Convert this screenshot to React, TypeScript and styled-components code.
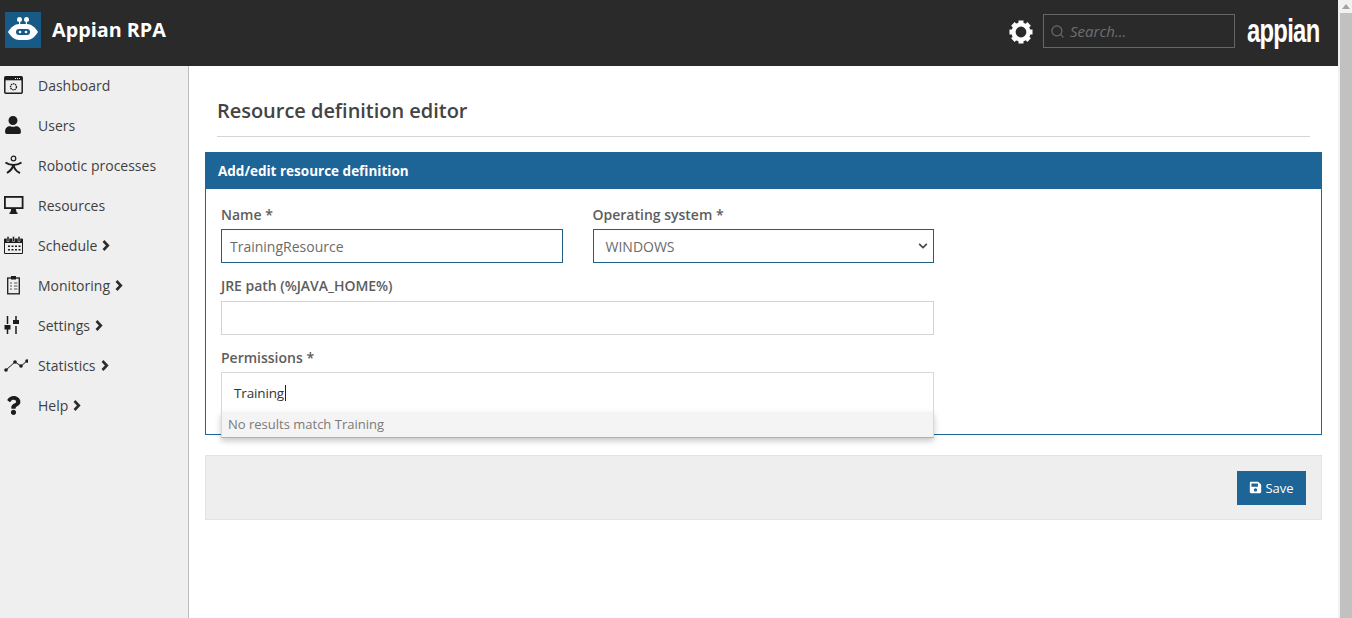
import React from "react";
import styled, { createGlobalStyle } from "styled-components";
import { Search } from "lucide-react";
import { FaSave, FaUser, FaQuestion, FaChevronDown } from "react-icons/fa";

const GlobalStyle = createGlobalStyle`
  html, body {
    margin: 0;
    padding: 0;
    height: 100%;
    overflow: hidden;
    background: #fff;
    font-family: "Open Sans", "Liberation Sans", sans-serif;
  }
  * { box-sizing: border-box; }
`;

const Frame = styled.div`
  width: 1352px;
  height: 618px;
  display: flex;
  overflow: hidden;
`;

const Page = styled.div`
  width: 1338px;
  display: flex;
  flex-direction: column;
`;

const ScrollTrack = styled.div`
  width: 14px;
  padding-left: 2px;
  background: #f1f1f1;
  display: flex;
  flex-direction: column;
  align-items: stretch;
`;

const ScrollArrow = styled.div`
  height: 13px;
  display: flex;
  align-items: center;
  justify-content: center;
  svg { display: block; }
`;

const ScrollThumb = styled.div`
  flex: 1;
  background: #c1c1c1;
`;

const Header = styled.header`
  height: 66px;
  background: #2a2a2a;
  display: flex;
  align-items: center;
  padding: 0 18px 6px 5px;
  flex-shrink: 0;
`;

const LogoBox = styled.div`
  width: 36px;
  height: 36px;
  background: #175a85;
  display: flex;
`;

const Brand = styled.span`
  color: #fff;
  font-size: 19.800px;
  font-weight: 700;
  margin-left: 11px;
  margin-bottom: 2px;
  flex: 1;
`;

const GearButton = styled.div`
  color: #fff;
  display: flex;
  margin-right: 10px;
  margin-top: 4px;
`;

const SearchBox = styled.div`
  width: 192px;
  height: 34px;
  border: 1px solid #666;
  display: flex;
  align-items: center;
  padding-left: 6px;
  gap: 5px;
  color: #6a6a6a;
  margin-top: 2px;
`;

const SearchText = styled.span`
  font-size: 15px;
  font-style: italic;
  color: #6f6f6f;
`;

const AppianMark = styled.span`
  color: #fff;
  font-family: "Liberation Sans", sans-serif;
  font-size: 34px;
  font-weight: 700;
  letter-spacing: -1px;
  line-height: 30px;
  margin-left: 12px;
  width: 73px;
  display: inline-block;
  transform: scaleX(0.7);
  transform-origin: left center;
  white-space: nowrap;
`;

const Body = styled.div`
  flex: 1;
  display: flex;
  min-height: 0;
`;

const Sidebar = styled.nav`
  width: 189px;
  flex-shrink: 0;
  background: #efefef;
  border-right: 1px solid #bdbdbd;
`;

const NavItem = styled.div`
  height: 40px;
  padding-bottom: 2px;
  display: flex;
  align-items: center;
  color: #3f3f3f;
  font-size: 14px;
`;

const NavIcon = styled.div`
  width: 38px;
  padding-left: 4px;
  display: flex;
  align-items: center;
  color: #1c1c1c;
  flex-shrink: 0;
`;

const NavArrow = styled.span`
  display: flex;
  margin-left: 5px;
  color: #2b2b2b;
`;

const Main = styled.main`
  flex: 1;
  padding: 0 16px;
  display: flex;
  flex-direction: column;
`;

const TitleRow = styled.div`
  margin: 0 12px 15px 12px;
  height: 71px;
  border-bottom: 1px solid #d5d5d5;
  display: flex;
  align-items: flex-start;
  padding-top: 30px;
`;

const Title = styled.h1`
  margin: 0;
  font-size: 20px;
  line-height: 30px;
  font-weight: 600;
  letter-spacing: -0.03px;
  color: #444;
`;

const Panel = styled.section`
  border: 1px solid #1d6497;
  height: 283px;
`;

const PanelHead = styled.div`
  height: 36px;
  padding: 0 0 1px 12px;
  background: #1d6497;
  color: #fff;
  font-size: 13.500px;
  font-weight: 700;
  display: flex;
  align-items: center;
`;

const Form = styled.div`
  width: 713px;
  margin-left: 15px;
  padding-top: 16px;
  display: flex;
  flex-direction: column;
`;

const Row = styled.div`
  display: flex;
  gap: 30px;
`;

const Field = styled.div`
  flex: 1;
  min-width: 0;
  position: relative;
`;

const Label = styled.label`
  display: block;
  font-size: 14px;
  line-height: 20px;
  font-weight: 600;
  color: #5d5d5d;
  margin-bottom: 4px;
`;

const JreLabel = styled(Label)`
  margin-bottom: 5px;
  letter-spacing: -0.03px;
`;

const Control = styled.div<{ $active?: boolean }>`
  height: 34px;
  border: 1px solid ${(p) => (p.$active ? "#1d5f80" : "#d4d4d4")};
  background: #fff;
  display: flex;
  align-items: center;
  padding: 0 8px;
  font-size: 14px;
  color: #6b6b6b;
  justify-content: space-between;
`;

const SelectControl = styled(Control)`
  padding-left: 12px;
  padding-right: 5px;
`;

const JreBlock = styled.div`
  margin-top: 13px;
`;

const PermissionBlock = styled.div`
  margin-top: 13px;
`;

const Permissions = styled.div`
  height: 41px;
  border: 1px solid #d8d8d8;
  border-bottom: 0;
  background: #fff;
  padding-left: 12px;
  display: flex;
  align-items: center;
  font-size: 13.500px;
  letter-spacing: -0.15px;
  color: #333;
`;

const Caret = styled.span`
  width: 1px;
  height: 16px;
  margin-left: 1px;
  background: #222;
`;

const Dropdown = styled.div`
  position: absolute;
  left: 0;
  right: 0;
  top: 64px;
  height: 26px;
  background: #f4f4f4;
  border: 1px solid #d8d8d8;
  border-top: 0;
  border-bottom-color: #b0b0b0;
  box-shadow: 0 3px 6px rgba(0, 0, 0, 0.22);
  padding-left: 6px;
  font-size: 13px;
  line-height: 24px;
  color: #7a7a7a;
`;

const Footer = styled.div`
  margin-top: 20px;
  height: 65px;
  background: #eeeeee;
  border: 1px solid #e2e2ea;
  display: flex;
  align-items: center;
  justify-content: flex-end;
  padding-right: 15px;
`;

const SaveButton = styled.button`
  height: 34px;
  width: 69px;
  background: #1d6497;
  border: 0;
  color: #fff;
  font-family: inherit;
  font-size: 13px;
  display: flex;
  align-items: center;
  justify-content: center;
  gap: 3px;
  padding: 0;
`;

const RobotLogo = () => (
  <svg width="36" height="36" viewBox="0 0 36 36">
    <g fill="#fff">
      <circle cx="14.500" cy="7.500" r="2.500" />
      <circle cx="21.500" cy="7.500" r="2.500" />
      <rect x="14" y="8" width="1.200" height="5" />
      <rect x="20.800" y="8" width="1.200" height="5" />
      <path d="M3 20c3-5 7-8 11-8h8c4 0 8 3 11 8-3 5-7 8-11 8h-8c-4 0-8-3-11-8z" />
    </g>
    <rect x="11" y="17" width="14" height="6" rx="3" fill="#175a85" />
    <circle cx="15" cy="20" r="1.300" fill="#fff" />
    <circle cx="21" cy="20" r="1.300" fill="#fff" />
  </svg>
);

const GearIcon = () => (
  <svg width="24" height="24" viewBox="0 0 24 24">
    <circle cx="12" cy="12" r="7.500" fill="none" stroke="#fff" strokeWidth="4.200" />
    {[0, 45, 90, 135, 180, 225, 270, 315].map((a) => (
      <rect key={a} x="9.500" y="0.500" width="5" height="5" fill="#fff" transform={`rotate(${a} 12 12)`} />
    ))}
  </svg>
);

const DashboardIcon = () => (
  <svg width="19" height="18" viewBox="0 0 19 18">
    <rect x="0.800" y="0.800" width="17.400" height="16.400" rx="1" fill="none" stroke="#1c1c1c" strokeWidth="1.500" />
    <rect x="0.800" y="0.800" width="17.400" height="3.500" fill="#1c1c1c" />
    <path d="M11 2.500h1M13 2.500h1M15 2.500h1" stroke="#efefef" strokeWidth="1" />
    <circle cx="9.500" cy="10.800" r="3" fill="none" stroke="#1c1c1c" strokeWidth="1.300" strokeDasharray="1.600 0.600" />
  </svg>
);

const RobotProcessIcon = () => (
  <svg width="20" height="20" viewBox="0 0 20 20">
    <circle cx="9.500" cy="3.500" r="2.300" fill="none" stroke="#1c1c1c" strokeWidth="1.200" />
    <path d="M1.500 7.500C5 10 7 10 9.500 10s5-.5 8-2.500M9.500 9.500C9 13 6 16 3 18M9.500 9.500c.5 4 3 7 6.500 8.500" fill="none" stroke="#1c1c1c" strokeWidth="2" />
  </svg>
);

const MonitorIcon = () => (
  <svg width="20" height="18" viewBox="0 0 20 18">
    <rect x="0.900" y="0.900" width="17.700" height="11.200" fill="none" stroke="#1c1c1c" strokeWidth="1.800" />
    <path d="M7.500 12h4l1.200 4.500H13.500V18h-8v-1.500h.8z" fill="#1c1c1c" />
  </svg>
);

const CalendarIcon = () => (
  <svg width="20" height="18" viewBox="0 0 20 18">
    <path d="M.5 3h18v14.500H.5z" fill="none" stroke="#1c1c1c" />
    <path d="M.5 3h18v4H.5z" fill="#1c1c1c" />
    <path d="M3 .5h2v5H3zM8.500.5h2v5h-2zM14 .5h2v5h-2z" fill="#1c1c1c" stroke="#efefef" strokeWidth="0.500" />
    <path d="M4 9.500h2v1.500H4zM7.500 9.500h2v1.500h-2zM11 9.500h2v1.500h-2zM14.500 9.500h2v1.500h-2zM4 13h2v1.500H4zM7.500 13h2v1.500h-2zM11 13h2v1.500h-2zM14.500 13h2v1.500h-2z" fill="#1c1c1c" />
  </svg>
);

const ClipboardIcon = () => (
  <svg width="20" height="20" viewBox="0 0 20 20">
    <rect x="3.700" y="3" width="11.600" height="15.800" fill="none" stroke="#1c1c1c" strokeWidth="1.300" />
    <rect x="7" y="1" width="5" height="3.500" fill="#1c1c1c" />
    <path d="M6 8h2M10 8h3.500M6 11h2M10 11h3.500M6 14h2M10 14h3.500" stroke="#555" strokeWidth="1" />
  </svg>
);

const SlidersIcon = () => (
  <svg width="20" height="20" viewBox="0 0 20 20">
    <path d="M3.500 1v18M12 1v18" stroke="#1c1c1c" strokeWidth="1.500" strokeDasharray="8 2" fill="none" />
    <rect x="0.500" y="10" width="6" height="4.500" fill="#1c1c1c" />
    <rect x="9" y="5" width="6" height="4" fill="#1c1c1c" />
  </svg>
);

const StatsIcon = () => (
  <svg width="24" height="14" viewBox="0 0 24 14">
    <path d="M2 12l9-8 6 4 6-5" fill="none" stroke="#1c1c1c" strokeWidth="1" />
    <circle cx="2" cy="12" r="1.800" fill="#1c1c1c" />
    <circle cx="11" cy="4" r="1.800" fill="#1c1c1c" />
    <circle cx="17" cy="8" r="1.800" fill="#1c1c1c" />
    <circle cx="23" cy="3" r="1.800" fill="#1c1c1c" />
  </svg>
);

const BoldChevron = () => (
  <svg width="8" height="11" viewBox="0 0 8 11">
    <path d="M1.500 1l4.300 4.500-4.300 4.500" fill="none" stroke="currentColor" strokeWidth="2.600" />
  </svg>
);

const navItems: { label: string; icon: React.ReactNode; more?: boolean }[] = [
  { label: "Dashboard", icon: <DashboardIcon /> },
  { label: "Users", icon: <FaUser size={18} /> },
  { label: "Robotic processes", icon: <RobotProcessIcon /> },
  { label: "Resources", icon: <MonitorIcon /> },
  { label: "Schedule", icon: <CalendarIcon />, more: true },
  { label: "Monitoring", icon: <ClipboardIcon />, more: true },
  { label: "Settings", icon: <SlidersIcon />, more: true },
  { label: "Statistics", icon: <StatsIcon />, more: true },
  { label: "Help", icon: <FaQuestion size={19} />, more: true },
];

export default function App() {
  return (
    <Frame>
      <GlobalStyle />
      <Page>
        <Header>
          <LogoBox>
            <RobotLogo />
          </LogoBox>
          <Brand>Appian RPA</Brand>
          <GearButton>
            <GearIcon />
          </GearButton>
          <SearchBox>
            <Search size={15} strokeWidth={2} />
            <SearchText>Search...</SearchText>
          </SearchBox>
          <AppianMark>appian</AppianMark>
        </Header>
        <Body>
          <Sidebar>
            {navItems.map((item) => (
              <NavItem key={item.label}>
                <NavIcon>{item.icon}</NavIcon>
                {item.label}
                {item.more && (
                  <NavArrow>
                    <BoldChevron />
                  </NavArrow>
                )}
              </NavItem>
            ))}
          </Sidebar>
          <Main>
            <TitleRow>
              <Title>Resource definition editor</Title>
            </TitleRow>
            <Panel>
              <PanelHead>Add/edit resource definition</PanelHead>
              <Form>
                <Row>
                  <Field>
                    <Label>Name *</Label>
                    <Control $active>TrainingResource</Control>
                  </Field>
                  <Field>
                    <Label>Operating system *</Label>
                    <SelectControl $active>
                      WINDOWS
                      <FaChevronDown size={10} color="#444" />
                    </SelectControl>
                  </Field>
                </Row>
                <JreBlock>
                  <JreLabel>JRE path (%JAVA_HOME%)</JreLabel>
                  <Control />
                </JreBlock>
                <PermissionBlock>
                  <Field>
                    <Label>Permissions *</Label>
                    <Permissions>
                      Training
                      <Caret />
                    </Permissions>
                    <Dropdown>No results match Training</Dropdown>
                  </Field>
                </PermissionBlock>
              </Form>
            </Panel>
            <Footer>
              <SaveButton>
                <FaSave size={13} />
                Save
              </SaveButton>
            </Footer>
          </Main>
        </Body>
      </Page>
      <ScrollTrack>
        <ScrollArrow>
          <svg width="8" height="5" viewBox="0 0 8 5">
            <path d="M4 0l4 5H0z" fill="#a3a3a3" />
          </svg>
        </ScrollArrow>
        <ScrollThumb />
      </ScrollTrack>
    </Frame>
  );
}
